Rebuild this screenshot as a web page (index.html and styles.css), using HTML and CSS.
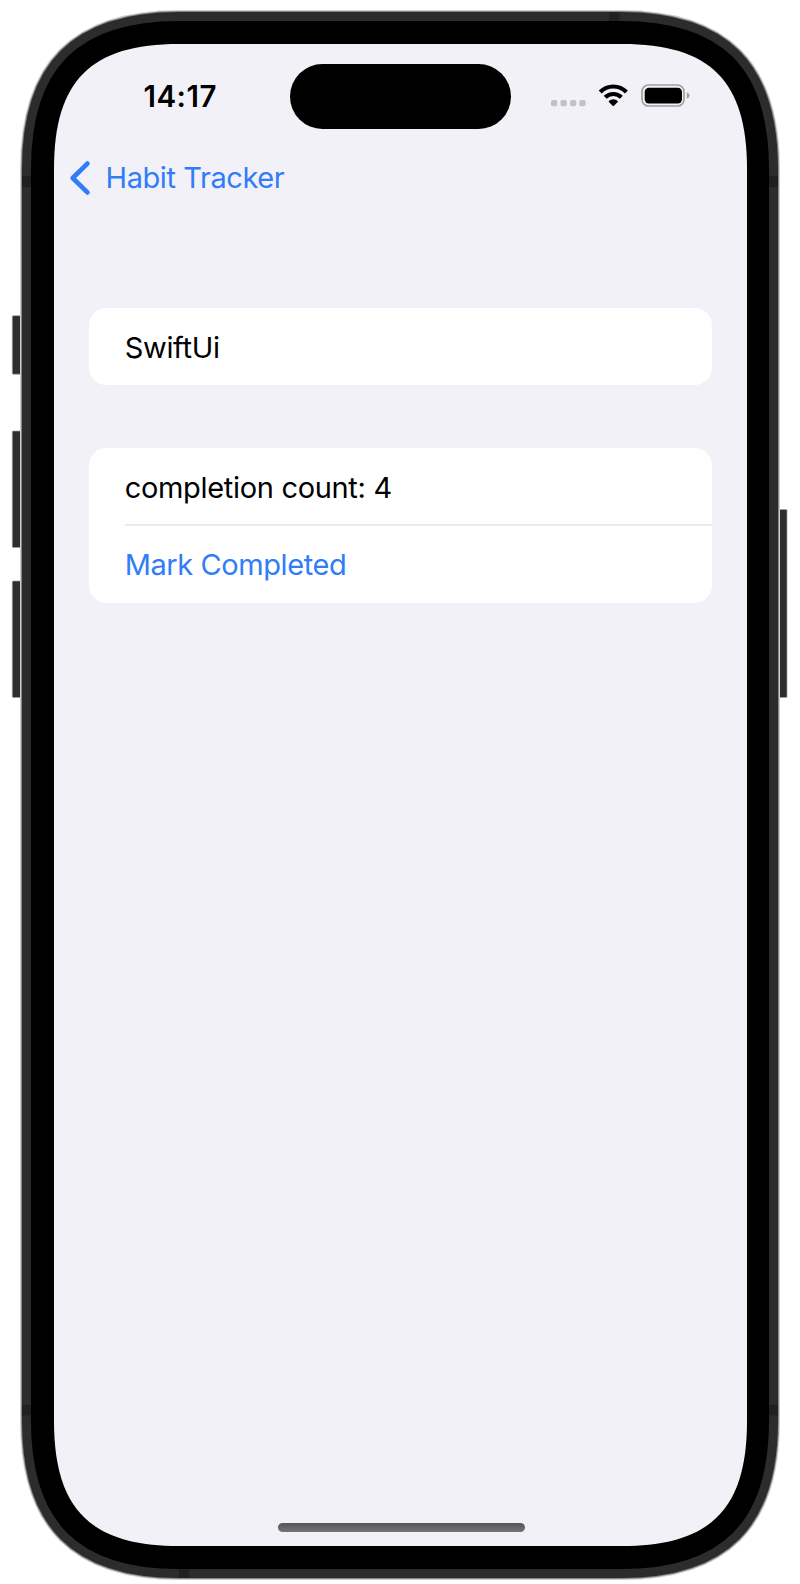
FILE: index.html
```html
<!DOCTYPE html>
<html lang="en">
<head>
<meta charset="utf-8">
<title>Habit Tracker</title>
<link rel="stylesheet" href="styles.css">
</head>
<body>
<div class="device">
  <svg class="frame" viewBox="0 0 800 1584" aria-hidden="true">
    <defs>
      <path id="shell" d="M179 44H621c88.3 0 125 36.7 125 125V1421c0 88.3-36.7 125-125 125H179c-88.3 0-125-36.7-125-125V169c0-88.3 36.7-125 125-125Z"/>
    </defs>
    <g class="buttons">
      <rect x="12.3" y="315.7" width="12" height="58.5" rx="1"/>
      <rect x="12.3" y="431" width="12" height="116.5" rx="1"/>
      <rect x="12.3" y="581" width="12" height="116.5" rx="1"/>
      <rect x="776" y="509.5" width="11" height="188" rx="1"/>
    </g>
    <use href="#shell" class="halo"/>
    <use href="#shell" class="edge"/>
    <use href="#shell" class="band"/>
    <g class="seams">
      <rect x="22" y="176" width="10" height="11"/>
      <rect x="768" y="176" width="10" height="11"/>
      <rect x="22" y="1405" width="10" height="10.5"/>
      <rect x="768" y="1405" width="10" height="10.5"/>
      <rect x="609" y="12.3" width="10.3" height="10"/>
      <rect x="179" y="1567" width="10.5" height="10.5"/>
    </g>
    <use href="#shell" class="bezel"/>
    <path class="glass" d="M179 44H622c88.3 0 125 36.7 125 125V1421c0 88.3-36.7 125-125 125H179c-88.3 0-125-36.7-125-125V169c0-88.3 36.7-125 125-125Z"/>
  </svg>
  <main class="screen">
    <header class="status">
      <time class="clock">14:17</time>
      <div class="island"></div>
      <svg class="indicators" viewBox="0 0 142 26">
        <g fill="#c2c2c6">
          <rect x="1" y="18" width="6.3" height="6.3" rx="1.7"/>
          <rect x="10.5" y="18" width="6.3" height="6.3" rx="1.7"/>
          <rect x="20" y="18" width="6.3" height="6.3" rx="1.7"/>
          <rect x="29.3" y="18" width="6.3" height="6.3" rx="1.7"/>
        </g>
        <g fill="none" stroke="#000" stroke-width="4.2">
          <path d="M50.2 9.9a18.6 18.6 0 0 1 26.2 0"/>
          <path d="M55.2 15.3a11.6 11.6 0 0 1 16.2 0"/>
        </g>
        <path d="M58.9 19a6.4 6.4 0 0 1 8.8 0Q68.1 19.5 67.7 20L64 23.7Q63.3 24.4 62.6 23.7L58.9 20Q58.5 19.5 58.9 19Z"/>
        <rect x="92" y="3" width="42" height="21" rx="6.6" fill="none" stroke="#a0a0a4" stroke-width="1.7"/>
        <rect x="94.7" y="5.7" width="37.3" height="15.8" rx="4.2"/>
        <path d="M136.8 10.2q2.8 1 2.8 3.3t-2.8 3.3Z" fill="#a0a0a4"/>
      </svg>
    </header>
    <nav class="nav">
      <svg class="chevron" viewBox="0 0 22 36"><path d="M18.4 3.6L3.7 18L18.4 32.4"/></svg>
      <a class="back">Habit Tracker</a>
    </nav>
    <section class="card">
      <div class="row"><span class="name">SwiftUi</span></div>
    </section>
    <section class="card">
      <div class="row short"><span class="count">completion count: 4</span></div>
      <div class="row divided"><span class="action">Mark Completed</span></div>
    </section>
    <div class="home"></div>
  </main>
</div>
</body>
</html>
```
FILE: styles.css
```css
body { margin: 0; background: #fff; }
.device {
  position: relative;
  box-sizing: border-box;
  width: 800px;
  height: 1584px;
  padding: 44px 53px 38px 54px;
  font-family: Inter, "Liberation Sans", sans-serif;
  font-size: 29px;
  line-height: 36px;
  color: #000;
}
.frame { position: absolute; inset: 0; width: 800px; height: 1584px; }
.frame use { fill: none; }
.frame .halo { stroke: #d0d0d0; stroke-width: 68px; }
.frame .edge { stroke: #858585; stroke-width: 66px; }
.frame .band { stroke: #2c2c2c; stroke-width: 64px; }
.frame .bezel { stroke: #000; stroke-width: 46px; }
.frame .glass { fill: #f2f1f7; }
.buttons { fill: #2e2e2e; stroke: #a0a0a0; stroke-width: .7px; }
.seams { fill: #202020; }
.screen {
  position: relative;
  box-sizing: border-box;
  display: flex;
  flex-direction: column;
  width: 693px;
  height: 1502px;
}
.status { display: flex; height: 84px; padding-top: 20px; box-sizing: border-box; }
.clock {
  box-sizing: border-box;
  width: 236px;
  padding: 14px 0 0 89.5px;
  font-weight: 600;
  font-size: 29.5px;
  letter-spacing: .5px;
}
.island { width: 221px; height: 64.5px; border-radius: 33px; background: #000; }
.indicators { width: 142px; height: 26px; margin: 18px 0 0 39px; }
.nav { display: flex; align-items: center; height: 36px; margin: 31px 0 113px; padding-left: 15px; }
.chevron { width: 22px; height: 36px; margin-top: 1px; fill: none; stroke: #317cf7; stroke-width: 4.7px; stroke-linecap: round; stroke-linejoin: round; }
.back { margin-left: 14.5px; padding-top: 2px; color: #317cf7; }
.card { margin: 0 35.5px 63px 35.2px; border-radius: 17.5px; background: #fff; }
.row { display: flex; align-items: center; box-sizing: border-box; height: 77px; padding-top: 2px; margin-left: 35.5px; }
.short { height: 76px; padding-top: 3px; }
.divided { height: 79px; padding-top: 0; border-top: 2px solid #ebebed; }
.action { color: #317cf7; }
.name, .count, .action, .back { white-space: nowrap; letter-spacing: -.32px; }
.action, .back { letter-spacing: -.42px; }
.home { width: 247px; height: 9px; margin: auto auto 14px 223.5px; border-radius: 5px; background: linear-gradient(#555557, #757577); }
```
